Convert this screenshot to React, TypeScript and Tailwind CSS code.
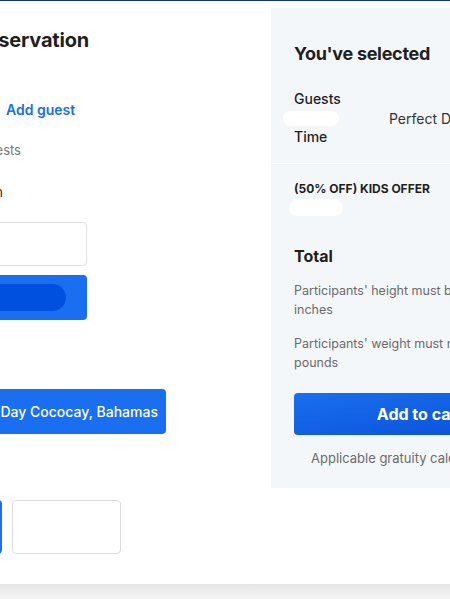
import React from "react"

const font = { fontFamily: "Inter, 'Liberation Sans', sans-serif" }

function Blob({ className }: { className: string }) {
  return <div className={`rounded-full ${className}`} />
}

export default function App() {
  return (
    <div className="w-[450px] h-[599px] overflow-hidden bg-white flex flex-col text-[#1f1f1f]" style={font}>
      <div className="h-px bg-[#15337f] shrink-0" />
      <div className="flex h-[583px] -ml-[150px] shrink-0">
        {/* Left column: reservation form */}
        <div className="w-[421px] shrink-0 flex flex-col">
          <h1 className="mt-[27px] w-[239px] text-right text-[20px] leading-[24px] font-bold tracking-[-0.2px] whitespace-nowrap">
            Make a reservation
          </h1>

          <div className="mt-[48px] flex items-center gap-[6px] text-[14px] leading-[20px] whitespace-nowrap">
            <span className="w-[150px] text-[#555]">1 Adult</span>
            <span className="font-semibold text-[#1a6ef0]">Add guest</span>
          </div>
          <p className="mt-[21px] w-[171px] text-right text-[13px] leading-[18px] text-[#777] whitespace-nowrap">
            Up to 9 guests
          </p>

          <label className="mt-[23px] w-[153px] text-right text-[14px] leading-[20px] text-[#333] whitespace-nowrap">
            Destination
          </label>
          <div className="mt-[20px] w-[237px] h-[44px] rounded border border-[#e2e2e2] bg-white" />
          <button className="mt-[9px] w-[237px] h-[45px] rounded bg-[#1a6ef0] flex items-center">
            <Blob className="ml-[40px] w-[176px] h-[27px] bg-[#0050e0]" />
          </button>

          <div className="mt-[69px] w-[316px] h-[45px] rounded bg-[#1a6ef0] text-white text-[14px] font-medium flex items-center justify-end pr-[8px] whitespace-nowrap">
            Perfect Day Cococay, Bahamas
          </div>

          <div className="mt-[66px] flex gap-[10px]">
            <div className="w-[152px] h-[54px] rounded bg-[#1a6ef0]" />
            <div className="w-[109px] h-[54px] rounded border border-[#dcdcdc] bg-white" />
          </div>
        </div>

        {/* Right column: summary */}
        <aside className="mt-[7px] w-[298px] h-[480px] shrink-0 bg-[#f4f7fa] flex flex-col">
          <div className="px-[23px]">
            <h2 className="mt-[34px] text-[18px] leading-[24px] font-bold tracking-[-0.3px]">You've selected</h2>
            <div className="mt-[23px] text-[14px] leading-[20px] font-medium">Guests</div>
            <div className="flex items-center h-[18px]">
              <Blob className="-ml-[11px] w-[56px] h-[15px] bg-white" />
              <span className="ml-[50px] text-[14px] text-[#333] whitespace-nowrap">Perfect Day Cococay</span>
            </div>
            <div className="text-[14px] leading-[20px] font-medium">Time</div>
          </div>
          <div className="mt-[16px] h-px bg-white" />
          <div className="px-[23px]">
            <div className="mt-[17px] text-[12px] leading-[16px] font-bold uppercase">(50% off) Kids offer</div>
            <Blob className="mt-[2px] -ml-[5px] w-[54px] h-[17px] bg-white" />

            <h3 className="mt-[29px] text-[16px] leading-[22px] font-bold">Total</h3>
            <p className="mt-[14px] text-[12.5px] leading-[19px] text-[#6b6b6b]">
              Participants' height must be at least 36 inches
            </p>
            <p className="mt-[15px] text-[12.5px] leading-[19px] text-[#6b6b6b]">
              Participants' weight must not exceed 250 pounds
            </p>
            <button className="mt-[21px] w-full h-[42px] rounded bg-gradient-to-br from-[#1a6ef0] to-[#0a4fd6] text-white text-[16px] font-bold">
              Add to cart
            </button>
            <p className="mt-[14px] pl-[17px] text-[13px] leading-[18px] text-[#6b6b6b] whitespace-nowrap">
              Applicable gratuity calculated at checkout
            </p>
          </div>
        </aside>
      </div>
      <div className="flex-1 bg-gradient-to-b from-[#e6e6e6] to-[#f4f4f4]" />
    </div>
  )
}
